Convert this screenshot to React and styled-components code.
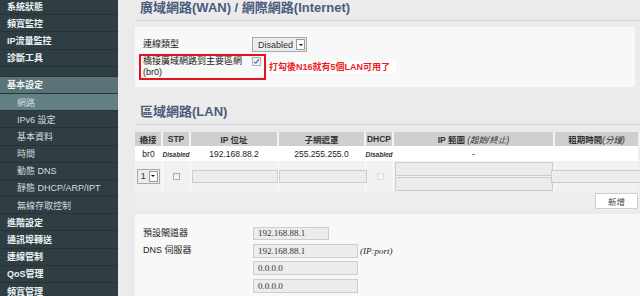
import React from 'react'
import styled, { createGlobalStyle } from 'styled-components'

const GlobalStyle = createGlobalStyle`
  body {
    margin: 0;
    background: #ebebeb;
    font-family: "Liberation Sans", "Noto Sans CJK TC", sans-serif;
  }
`

const Page = styled.div`
  display: flex;
  width: 640px;
  height: 296px;
  overflow: hidden;
  background: #ebebeb;
`

const Sidebar = styled.nav`
  width: 118px;
  flex-shrink: 0;
  align-self: flex-start;
  margin-top: -2px;
  background: #2f3e43;
  display: flex;
  flex-direction: column;
`
const MenuItem = styled.div`
  height: 17.2px;
  box-sizing: border-box;
  display: flex;
  align-items: center;
  padding-left: ${(p) => (p.$sub ? 17 : 7)}px;
  border-bottom: 1px solid #263338;
  font-size: 9px;
  color: ${(p) => (p.$sub ? '#d3dcde' : '#eef3f4')};
  font-weight: ${(p) => (p.$sub ? 400 : 600)};
  background: ${(p) => (p.$active === 'group' ? '#5a7377' : p.$active === 'page' ? '#627f83' : 'transparent')};
`
const MenuGap = styled.div`
  height: 10px;
  border-bottom: 1px solid #263338;
  box-sizing: border-box;
`

const Main = styled.main`
  flex: 1;
  min-width: 0;
  padding-left: 17px;
  display: flex;
  flex-direction: column;
`
const SectionTitle = styled.h2`
  margin: ${(p) => p.$top}px 0 0 0;
  padding: 0 0 4px 5px;
  font-size: 13px;
  line-height: 16px;
  font-weight: 700;
  color: #4b5b7e;
  border-bottom: 1px solid #d6d6d6;
  white-space: nowrap;
`
const Panel = styled.section`
  background: #f8f8f8;
  width: ${(p) => p.$width}px;
  margin-top: ${(p) => p.$top}px;
  padding: ${(p) => p.$pad};
  box-sizing: border-box;
`
const Row = styled.div`
  display: flex;
  align-items: ${(p) => p.$align || 'center'};
  margin-top: ${(p) => p.$top || 0}px;
  height: ${(p) => (p.$h ? p.$h + 'px' : 'auto')};
`
const Label = styled.div`
  width: ${(p) => p.$w}px;
  padding-left: ${(p) => p.$pl || 0}px;
  box-sizing: border-box;
  flex-shrink: 0;
  font-size: 9px;
  line-height: 11px;
  color: #222;
`
const Select = styled.div`
  display: flex;
  align-items: center;
  justify-content: space-between;
  width: ${(p) => p.$w}px;
  height: 15px;
  box-sizing: border-box;
  border: 1px solid #a8a8a8;
  background: #ececec;
  padding: 0 1px 0 ${(p) => p.$pl}px;
  font-size: 9px;
  color: #333;
`
const ArrowBtn = styled.span`
  width: 9px;
  height: 11px;
  box-sizing: border-box;
  border: 1px solid #9a9a9a;
  background: #fbfbfb;
  display: flex;
  align-items: center;
  justify-content: center;
  &::after {
    content: '';
    border-left: 2px solid transparent;
    border-right: 2px solid transparent;
    border-top: 2px solid #111;
  }
`
const Box = styled.span`
  display: inline-flex;
  align-items: center;
  justify-content: center;
  width: ${(p) => p.$size}px;
  height: ${(p) => p.$size}px;
  box-sizing: border-box;
  border: 1px solid ${(p) => (p.$faded ? '#dedede' : '#a5adb8')};
  background: ${(p) => (p.$faded ? '#f4f4f4' : 'linear-gradient(#e9ecf1, #fbfbfd)')};
  margin-top: ${(p) => p.$top || 0}px;
  flex-shrink: 0;
`
const RedBox = styled.div`
  display: flex;
  align-items: flex-start;
  width: 127px;
  height: 26px;
  box-sizing: border-box;
  border: 2px solid #e3141e;
  padding-left: 2px;
`
const Note = styled.span`
  margin-left: 2px;
  padding: 0 6px 0 1px;
  height: 12px;
  line-height: 12px;
  background: #fff;
  color: #ee1c25;
  font-size: 9px;
  font-weight: 700;
  white-space: nowrap;
`

const LanPanel = styled.section`
  width: 506px;
  margin-top: 7px;
  background: #eeeeee;
`
const Table = styled.table`
  width: 503px;
  table-layout: fixed;
  border-collapse: collapse;
`
const Th = styled.th`
  height: 14px;
  padding: 0;
  background: #cfcfcf;
  border-left: 2px solid #f4f4f4;
  font-size: 8.5px;
  font-weight: 700;
  color: #333;
  text-align: center;
  white-space: nowrap;
  &:first-child { border-left: none; }
  em { font-weight: 400; }
`
const Td = styled.td`
  height: ${(p) => p.$h}px;
  padding: 0;
  background: ${(p) => (p.$white ? '#fff' : '#f1f1f1')};
  border-left: ${(p) => (p.$white ? 'none' : '1px solid #fbfbfb')};
  font-size: 8.5px;
  color: #222;
  text-align: center;
  vertical-align: middle;
  &:first-child { border-left: none; }
`
const Tiny = styled.span`
  font-size: 6.5px;
  font-style: italic;
  font-weight: 700;
  color: #333;
`
const CellStack = styled.div`
  display: flex;
  flex-direction: ${(p) => (p.$column ? 'column' : 'row')};
  align-items: ${(p) => (p.$column ? 'stretch' : 'center')};
  justify-content: ${(p) => p.$justify || 'center'};
  gap: 1px;
  padding: 0 ${(p) => p.$px || 0}px;
`
const Field = styled.div`
  height: ${(p) => p.$h || 13}px;
  width: ${(p) => (p.$w ? p.$w + 'px' : '100%')};
  flex: none;
  box-sizing: border-box;
  border: 1px solid #cdcdcd;
  background: #ececec;
  font-family: "Liberation Serif", "Noto Sans CJK TC", serif;
  font-size: 9px;
  line-height: ${(p) => (p.$h || 13) - 2}px;
  padding-left: 4px;
  color: #333;
  text-align: left;
`
const ButtonRow = styled.div`
  height: 19px;
  display: flex;
  justify-content: flex-end;
  align-items: center;
  padding-right: 3px;
`
const Button = styled.button`
  width: 43px;
  height: 16px;
  padding: 0;
  border: 1px solid #cfcfcf;
  background: #fff;
  font-family: "Liberation Sans", "Noto Sans CJK TC", sans-serif;
  font-size: 8.5px;
  color: #444;
`
const Hint = styled.span`
  margin-left: 2px;
  font-family: "Liberation Serif", serif;
  font-style: italic;
  font-size: 9px;
  color: #222;
`

const Tick = () => (
  <svg width="7" height="7" viewBox="0 0 7 7">
    <path d="M1.2 3.8 L2.8 5.3 L5.9 1.3" fill="none" stroke="#3a5a9a" strokeWidth="1.1" />
  </svg>
)

const menu = [
  { t: '系統狀態' },
  { t: '頻寬監控' },
  { t: 'IP流量監控' },
  { t: '診斷工具' },
  { gap: true },
  { t: '基本設定', active: 'group' },
  { t: '網路', sub: true, active: 'page' },
  { t: 'IPv6 設定', sub: true },
  { t: '基本資料', sub: true },
  { t: '時間', sub: true },
  { t: '動態 DNS', sub: true },
  { t: '靜態 DHCP/ARP/IPT', sub: true },
  { t: '無線存取控制', sub: true },
  { t: '進階設定' },
  { t: '通訊埠轉送' },
  { t: '連線管制' },
  { t: 'QoS管理' },
  { t: '頻寬管理' },
]

const cols = [27, 28, 88, 87, 28, 161, 84]

export default function App() {
  return (
    <>
      <GlobalStyle />
      <Page>
        <Sidebar>
          {menu.map((m, i) =>
            m.gap ? (
              <MenuGap key={i} />
            ) : (
              <MenuItem key={i} $sub={m.sub} $active={m.active}>
                {m.t}
              </MenuItem>
            )
          )}
        </Sidebar>

        <Main>
          <SectionTitle $top={0}>廣域網路(WAN) / 網際網路(Internet)</SectionTitle>
          <Panel $width={500} $top={6} $pad="10px 0 7px 4px">
            <Row>
              <Label $w={113} $pl={4}>連線類型</Label>
              <Select $w={55} $pl={5}>
                Disabled
                <ArrowBtn />
              </Select>
            </Row>
            <Row $top={2}>
              <RedBox>
                <Label $w={109}>
                  橋接廣域網路到主要區網
                  <br />
                  (br0)
                </Label>
                <Box $size={9} $top={1}>
                  <Tick />
                </Box>
              </RedBox>
              <Note>打勾後N16就有5個LAN可用了</Note>
            </Row>
          </Panel>

          <SectionTitle $top={17}>區域網路(LAN)</SectionTitle>
          <LanPanel>
            <Table>
              <colgroup>
                {cols.map((w, i) => (
                  <col key={i} style={{ width: w }} />
                ))}
              </colgroup>
              <thead>
                <tr>
                  <Th>橋接</Th>
                  <Th>STP</Th>
                  <Th>IP 位址</Th>
                  <Th>子網遮罩</Th>
                  <Th>DHCP</Th>
                  <Th>
                    IP 範圍 <em>(起始/終止)</em>
                  </Th>
                  <Th>
                    租期時間<em>(分鐘)</em>
                  </Th>
                </tr>
              </thead>
              <tbody>
                <tr>
                  <Td $white $h={15}>br0</Td>
                  <Td $white $h={15}><Tiny>Disabled</Tiny></Td>
                  <Td $white $h={15}>192.168.88.2</Td>
                  <Td $white $h={15}>255.255.255.0</Td>
                  <Td $white $h={15}><Tiny>Disabled</Tiny></Td>
                  <Td $white $h={15}>-</Td>
                  <Td $white $h={15}></Td>
                </tr>
                <tr>
                  <Td $h={30}>
                    <CellStack>
                      <Select $w={23} $pl={3}>
                        1
                        <ArrowBtn />
                      </Select>
                    </CellStack>
                  </Td>
                  <Td $h={30}>
                    <CellStack>
                      <Box $size={7} />
                    </CellStack>
                  </Td>
                  <Td $h={30}>
                    <CellStack $justify="flex-end">
                      <Field $w={86} />
                    </CellStack>
                  </Td>
                  <Td $h={30}>
                    <CellStack $justify="flex-start">
                      <Field $w={88} />
                    </CellStack>
                  </Td>
                  <Td $h={30}>
                    <CellStack $justify="flex-end" $px={9}>
                      <Box $size={7} $faded />
                    </CellStack>
                  </Td>
                  <Td $h={30}>
                    <CellStack $column $px={1}>
                      <Field $h={14} />
                      <Field $h={14} />
                    </CellStack>
                  </Td>
                  <Td $h={30}>
                    <CellStack>
                      <Field $w={90} />
                    </CellStack>
                  </Td>
                </tr>
              </tbody>
            </Table>
            <ButtonRow>
              <Button>新增</Button>
            </ButtonRow>
          </LanPanel>

          <Panel $width={506} $top={4} $pad="11px 0 4px 8px">
            <Row $h={17}>
              <Label $w={110}>預設閘道器</Label>
              <Field $w={76}>192.168.88.1</Field>
            </Row>
            <Row $h={17}>
              <Label $w={110}>DNS 伺服器</Label>
              <Field $w={105} $h={14}>192.168.88.1</Field>
              <Hint>(IP:port)</Hint>
            </Row>
            <Row $h={18}>
              <Label $w={110} />
              <Field $w={105} $h={14}>0.0.0.0</Field>
            </Row>
            <Row $h={18}>
              <Label $w={110} />
              <Field $w={105} $h={14}>0.0.0.0</Field>
            </Row>
          </Panel>
        </Main>
      </Page>
    </>
  )
}
